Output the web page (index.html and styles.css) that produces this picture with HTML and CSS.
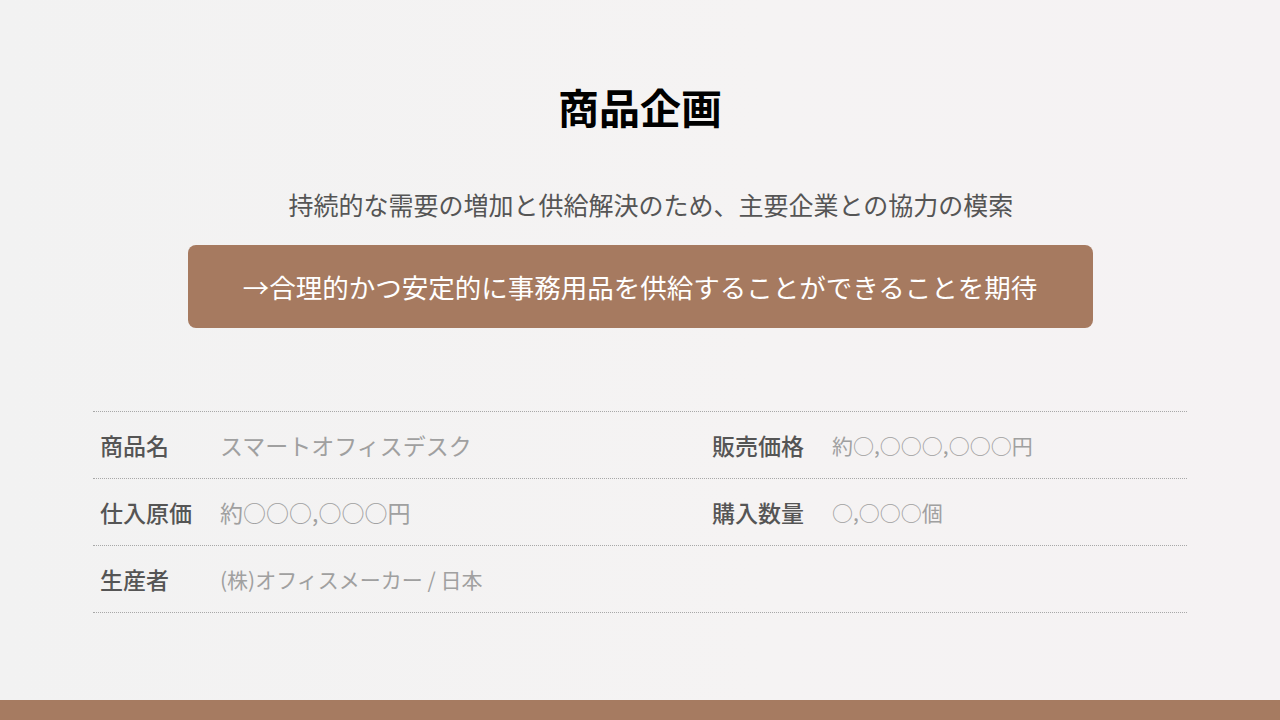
FILE: index.html
```html
<!DOCTYPE html>
<html lang="ja">
<head>
<meta charset="utf-8">
<link rel="stylesheet" href="styles.css">
</head>
<body>
<div class="page">
  <main class="content">
    <h1 class="title">商品企画</h1>
    <p class="subtitle">持続的な需要の増加と供給解決のため、主要企業との協力の模索</p>
    <div class="banner">→合理的かつ安定的に事務用品を供給することができることを期待</div>
    <div class="table">
      <div class="row">
        <div class="cell"><span class="label">商品名</span><span class="value">スマートオフィスデスク</span></div>
        <div class="cell"><span class="label">販売価格</span><span class="value small">約○,○○○,○○○円</span></div>
      </div>
      <div class="row">
        <div class="cell"><span class="label">仕入原価</span><span class="value">約○○○,○○○円</span></div>
        <div class="cell"><span class="label">購入数量</span><span class="value small">○,○○○個</span></div>
      </div>
      <div class="row">
        <div class="cell"><span class="label">生産者</span><span class="value small">(株)オフィスメーカー / 日本</span></div>
        <div class="cell"></div>
      </div>
    </div>
  </main>
  <footer class="footer"></footer>
</div>
</body>
</html>
```
FILE: styles.css
```css
html, body {
  margin: 0;
  padding: 0;
}
body {
  background: #f3f2f2;
  font-family: "Noto Sans CJK JP", "Noto Sans", sans-serif;
}
.page {
  width: 1280px;
  height: 720px;
  display: flex;
  flex-direction: column;
  background: linear-gradient(90deg, #f2f2f2 0%, #f5f3f3 60%, #f5f2f3 100%);
}
.content {
  flex: 1;
  display: flex;
  flex-direction: column;
  align-items: center;
  padding-top: 82px;
}
.title {
  margin: 0;
  font-size: 41px;
  line-height: 48px;
  font-weight: 700;
  color: #000;
}
.subtitle {
  margin: 57px 0 0;
  padding-left: 22px;
  font-size: 25px;
  line-height: 34px;
  color: #555;
}
.banner {
  margin-top: 24px;
  width: 905px;
  height: 83px;
  box-sizing: border-box;
  background: #a67a60;
  border-radius: 8px;
  color: #fff;
  font-size: 26.5px;
  display: flex;
  align-items: center;
  justify-content: center;
}
.table {
  margin-top: 83px;
  width: 1094px;
  border-top: 1px dotted #a8a8a8;
}
.row {
  display: grid;
  grid-template-columns: 1fr 1fr;
  column-gap: 130px;
  height: 66px;
  border-bottom: 1px dotted #a8a8a8;
}
.cell {
  display: flex;
  align-items: center;
  padding: 0 7px;
}
.label {
  width: 120px;
  flex: none;
  font-size: 23px;
  font-weight: 500;
  color: #555;
}
.value {
  font-size: 23px;
  color: #a0a0a0;
}
.value.small {
  font-size: 21px;
}
.footer {
  height: 20px;
  background: #a67b61;
}
```
